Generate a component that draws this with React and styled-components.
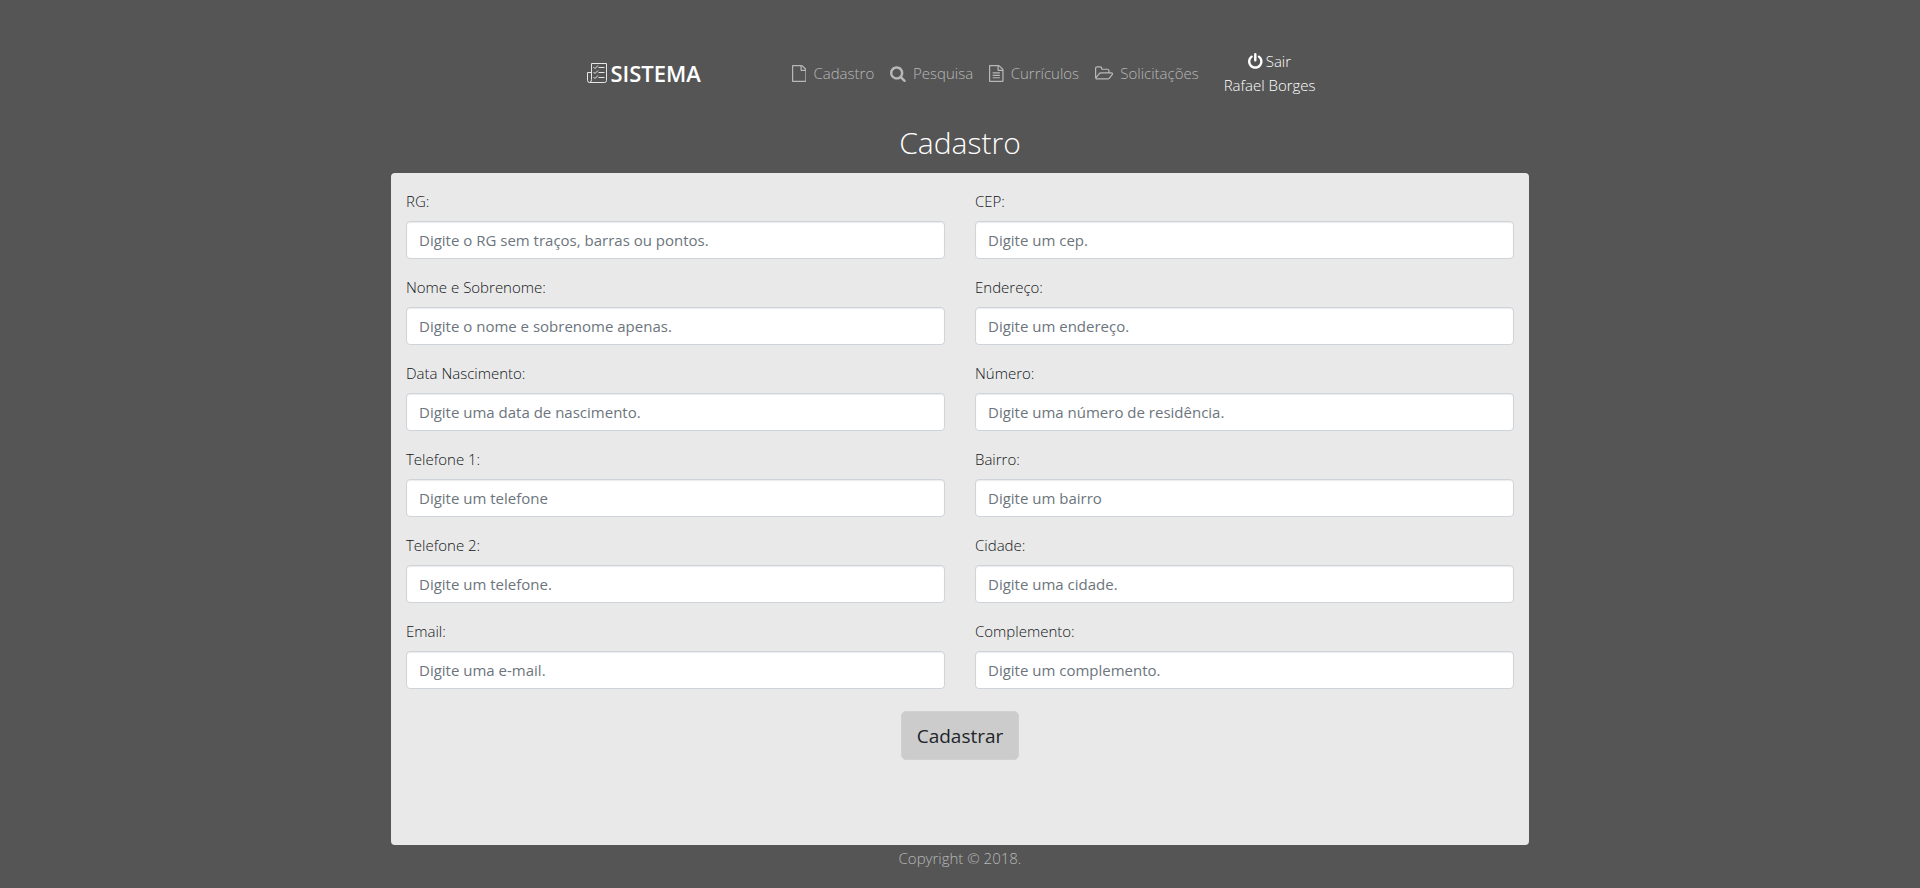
import React from "react";
import styled, { createGlobalStyle } from "styled-components";

const GlobalStyle = createGlobalStyle`
  *, *::before, *::after { box-sizing: border-box; }
  body {
    margin: 0;
    background: #555;
    color: #fff;
    font-family: "Open Sans", "Noto Sans", sans-serif;
    font-size: 15px;
    font-weight: 300;
    line-height: 24px;
  }
`;

const Page = styled.div`
  display: flex;
  flex-direction: column;
  align-items: center;
  min-height: 100vh;
  padding: 49px 16px 16px;
`;

const Header = styled.header`
  display: flex;
  align-items: center;
  justify-content: center;
  flex-wrap: wrap;
  margin-bottom: 23px;
  padding-right: 18px;
`;

const Brand = styled.a`
  display: flex;
  align-items: center;
  gap: 2px;
  margin-right: 91px;
  color: #fff;
  font-size: 22px;
  font-weight: 600;
  text-decoration: none;
`;

const Nav = styled.nav`
  display: flex;
  flex-wrap: wrap;
  gap: 16px;
  margin-right: 25px;
`;

const NavLink = styled.a`
  display: flex;
  align-items: center;
  gap: 7px;
  color: #b8b8b8;
  text-decoration: none;
`;

const Account = styled.div`
  display: flex;
  flex-direction: column;
  align-items: center;
`;

const LogoutLink = styled.a`
  display: flex;
  align-items: center;
  gap: 3px;
  color: #fff;
  text-decoration: none;
`;

const Glyph = styled.svg`
  display: block;
  height: 17px;
  fill: currentColor;
`;

const LogoMark = styled.svg`
  display: block;
  width: 22px;
  height: 22px;
  fill: none;
  stroke: #e6e6e6;
`;

const Title = styled.h1`
  margin: 0 0 8px;
  font-size: 30px;
  font-weight: 300;
  line-height: 45px;
`;

const Panel = styled.form`
  display: flex;
  flex-direction: column;
  align-items: center;
  width: 100%;
  max-width: 1138px;
  padding: 16px 15px 85px;
  border-radius: 4px;
  background: #e9e9e9;
  color: #111518;
`;

const Fields = styled.div`
  display: grid;
  grid-template-columns: 1fr 1fr;
  gap: 16px 30px;
  width: 100%;
  margin-bottom: 22px;
`;

const Field = styled.div`
  display: flex;
  flex-direction: column;
  gap: 8px;
`;

const Input = styled.input`
  width: 100%;
  height: 38px;
  padding: 6px 12px;
  border: 1px solid #ced4da;
  border-radius: 4px;
  background: #fff;
  color: #495057;
  font: inherit;
  font-weight: 400;
  box-shadow: inset 0 1px 1px rgba(0, 0, 0, 0.08);
  &::placeholder { color: #6c757d; opacity: 1; }
`;

const SubmitButton = styled.button`
  height: 49px;
  padding: 8px 15px;
  border: 1px solid #d1d1d1;
  border-radius: 5px;
  background: #ccc;
  color: #212529;
  font: inherit;
  font-size: 19px;
  font-weight: 400;
  line-height: 30px;
  cursor: pointer;
`;

const Footer = styled.footer`
  padding-top: 1px;
  color: #b8b8b8;
`;

const FILE = "M1468 380q28 28 48 76t20 88v1152q0 40-28 68t-68 28h-1344q-40 0-68-28t-28-68v-1600q0-40 28-68t68-28h896q40 0 88 20t76 48zm-444-244v376h376q-10-29-22-41l-313-313q-12-12-41-22zm384 1528v-1024h-416q-40 0-68-28t-28-68v-416h-768v1536h1280z";

const glyphs = {
  file: { width: 1536, d: FILE },
  fileText: {
    width: 1536,
    d: FILE + "M384 800q0-14 9-23t23-9h704q14 0 23 9t9 23v64q0 14-9 23t-23 9h-704q-14 0-23-9t-9-23v-64zm736 224q14 0 23 9t9 23v64q0 14-9 23t-23 9h-704q-14 0-23-9t-9-23v-64q0-14 9-23t23-9h704zm0 256q14 0 23 9t9 23v64q0 14-9 23t-23 9h-704q-14 0-23-9t-9-23v-64q0-14 9-23t23-9h704z",
  },
  search: {
    width: 1664,
    d: "M1152 832q0-185-131.500-316.500t-316.500-131.500-316.500 131.500-131.500 316.500 131.500 316.500 316.500 131.500 316.500-131.500 131.500-316.500zm512 832q0 52-38 90t-90 38q-54 0-90-38l-343-342q-179 124-399 124-143 0-273.500-55.500t-225-150-150-225-55.500-273.500 55.500-273.500 150-225 225-150 273.500-55.500 273.500 55.500 225 150 150 225 55.500 273.500q0 220-124 399l343 343q37 37 37 90z",
  },
  folder: {
    width: 1920,
    d: "M1781 931q0-35-53-35h-1088q-40 0-85.500 21.500t-71.500 52.500l-294 363q-18 24-18 40 0 35 53 35h1088q40 0 86-22t71-53l294-363q18-22 18-39zm-1141-163h768v-160q0-40-28-68t-68-28h-576q-40 0-68-28t-28-68v-64q0-40-28-68t-68-28h-320q-40 0-68 28t-28 68v853l256-315q44-53 116-87.500t140-34.500zm1269 163q0 62-46 120l-295 363q-43 53-116 87.500t-140 34.500h-1088q-92 0-158-66t-66-158v-960q0-92 66-158t158-66h320q92 0 158 66t66 158v32h544q92 0 158 66t66 158v160h192q54 0 99 24.500t67 70.500q15 32 15 68z",
  },
  power: {
    width: 1536,
    d: "M1536 896q0 156-61 298t-164 245-245 164-298 61-298-61-245-164-164-245-61-298q0-182 80.500-343t226.500-270q43-32 95.500-25t83.500 50q32 42 24.500 94.500t-49.500 84.500q-98 74-151.500 181t-53.500 228q0 104 40.500 198.500t109.500 163.500 163.500 109.500 198.500 40.500 198.500-40.500 163.500-109.500 109.500-163.500 40.500-198.500q0-121-53.500-228t-151.500-181q-42-32-49.500-84.500t24.500-94.500q31-43 84-50t95 25q146 109 226.500 270t80.500 343zm-640-768v640q0 52-38 90t-90 38-90-38-38-90v-640q0-52 38-90t90-38 90 38 38 90z",
  },
};

function Icon({ name }) {
  const { width, d } = glyphs[name];
  return (
    <Glyph viewBox={`0 0 ${width} 1792`} aria-hidden="true">
      <path d={d} />
    </Glyph>
  );
}

const links = [
  { icon: "file", text: "Cadastro" },
  { icon: "search", text: "Pesquisa" },
  { icon: "fileText", text: "Currículos" },
  { icon: "folder", text: "Solicitações" },
];

const fields = [
  { id: "rg", label: "RG:", hint: "Digite o RG sem traços, barras ou pontos." },
  { id: "cep", label: "CEP:", hint: "Digite um cep." },
  { id: "nome", label: "Nome e Sobrenome:", hint: "Digite o nome e sobrenome apenas." },
  { id: "endereco", label: "Endereço:", hint: "Digite um endereço." },
  { id: "nascimento", label: "Data Nascimento:", hint: "Digite uma data de nascimento." },
  { id: "numero", label: "Número:", hint: "Digite uma número de residência." },
  { id: "telefone1", label: "Telefone 1:", hint: "Digite um telefone" },
  { id: "bairro", label: "Bairro:", hint: "Digite um bairro" },
  { id: "telefone2", label: "Telefone 2:", hint: "Digite um telefone." },
  { id: "cidade", label: "Cidade:", hint: "Digite uma cidade." },
  { id: "email", label: "Email:", hint: "Digite uma e-mail." },
  { id: "complemento", label: "Complemento:", hint: "Digite um complemento." },
];

export default function App() {
  return (
    <>
      <GlobalStyle />
      <Page>
        <Header>
          <Brand href="#">
            <LogoMark viewBox="0 0 22 22" aria-hidden="true">
              <path d="M5.500 17.500V1.500H20.500V18.500Q20.500 20.500 18.500 20.500H3.500Q1.500 20.500 1.500 18.500V10.500H5.500M5.500 17.500Q5.500 20.500 3.500 20.500" />
              <path d="M7.500 5l1.500 1.500 3-3M7.500 10l1.500 1.500 3-3M7.500 15l1.500 1.500 3-3M12.500 5.500h6M12.500 10.500h6M12.500 15.500h6" />
            </LogoMark>
            SISTEMA
          </Brand>
          <Nav>
            {links.map((link) => (
              <NavLink href="#" key={link.text}>
                <Icon name={link.icon} />
                {link.text}
              </NavLink>
            ))}
          </Nav>
          <Account>
            <LogoutLink href="#">
              <Icon name="power" />
              Sair
            </LogoutLink>
            <span>Rafael Borges</span>
          </Account>
        </Header>
        <Title>Cadastro</Title>
        <Panel onSubmit={(event) => event.preventDefault()}>
          <Fields>
            {fields.map((field) => (
              <Field key={field.id}>
                <label htmlFor={field.id}>{field.label}</label>
                <Input id={field.id} placeholder={field.hint} />
              </Field>
            ))}
          </Fields>
          <SubmitButton type="submit">Cadastrar</SubmitButton>
        </Panel>
        <Footer>Copyright © 2018.</Footer>
      </Page>
    </>
  );
}
